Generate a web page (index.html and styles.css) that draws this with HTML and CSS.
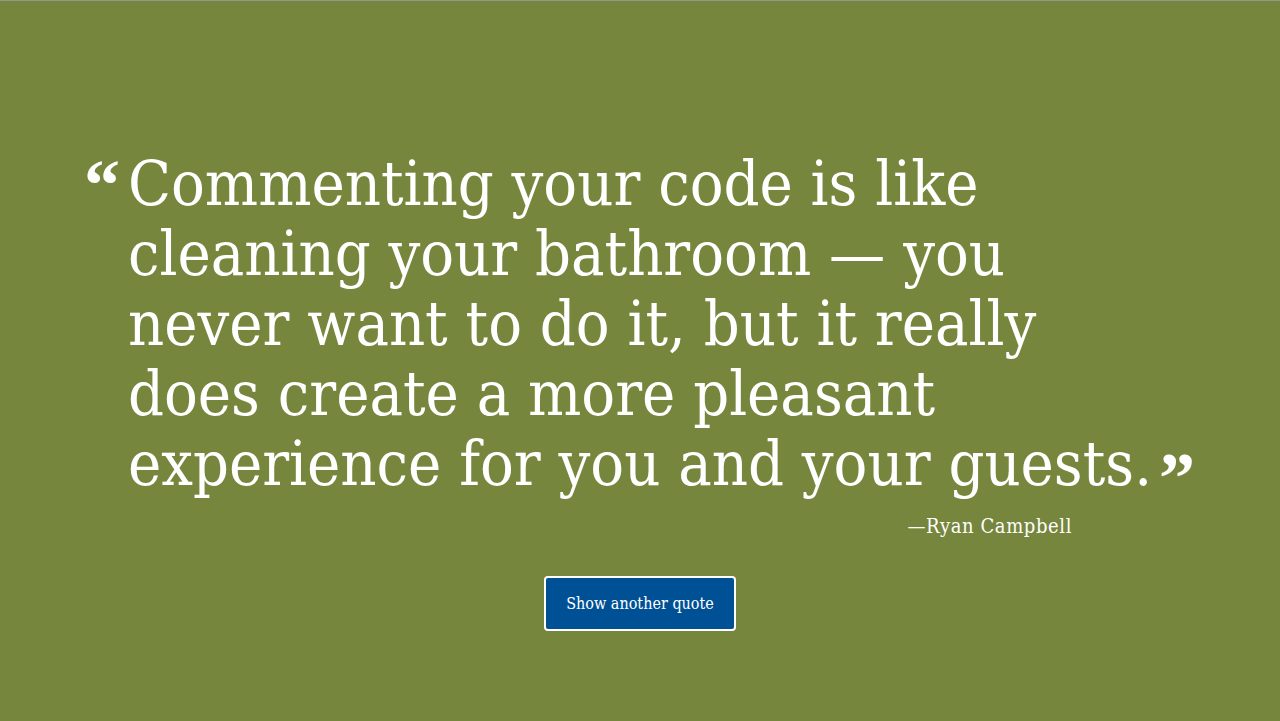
FILE: index.html
```html
<!DOCTYPE html>
<html lang="en">
<head>
<meta charset="utf-8">
<title>Random Quote</title>
<link rel="stylesheet" href="styles.css">
</head>
<body>
<main class="page">
  <figure class="quote-box">
    <blockquote class="quote">
      <span class="mark open">&ldquo;</span>Commenting your code is like<br>cleaning your bathroom — you<br>never want to do it, but it really<br>does create a more pleasant<br>experience for you and your guests.<span class="mark close">&rdquo;</span>
    </blockquote>
    <figcaption class="author">—Ryan Campbell</figcaption>
  </figure>
  <div class="actions">
    <button class="btn" type="button">Show another quote</button>
  </div>
</main>
</body>
</html>
```
FILE: styles.css
```css
html, body {
  margin: 0;
  padding: 0;
}
body {
  background: #76863c;
  border-top: 1px solid #959595;
  height: 720px;
  color: #fff;
  font-family: "DejaVu Serif Condensed", "DejaVu Serif", serif;
}
.page {
  padding-top: 148px;
}
.quote-box {
  margin: 0;
  padding: 0 0 0 128px;
}
.quote {
  position: relative;
  margin: 0;
  font-size: 62.5px;
  line-height: 70px;
  white-space: nowrap;
}
.mark {
  font-family: "Liberation Serif", serif;
  font-weight: bold;
  font-size: 72px;
  line-height: 0;
}
.mark.open {
  position: absolute;
  left: -44px;
  top: 36px;
}
.mark.close {
  margin-left: 7px;
  vertical-align: -17px;
}
.author {
  width: 944px;
  text-align: right;
  font-size: 20px;
  letter-spacing: 0.6px;
  margin-top: 13px;
  line-height: 28px;
}
.actions {
  display: flex;
  justify-content: center;
  margin-top: 36px;
}
.btn {
  width: 192px;
  height: 55px;
  background: #005096;
  color: #fff;
  border: 2px solid #fff;
  border-radius: 4px;
  font-family: "DejaVu Serif Condensed", "DejaVu Serif", serif;
  font-size: 16px;
  cursor: pointer;
}
```
